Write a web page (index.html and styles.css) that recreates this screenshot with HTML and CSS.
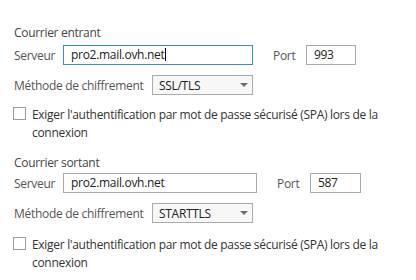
FILE: index.html
```html
<!DOCTYPE html>
<html>

<head>
    <title>Paramètres du serveur</title>
    <link rel="stylesheet" href="styles.css">
</head>

<body>
    <div class="settings">

        <!-- Courrier entrant -->
        <div class="server-block">
            <div class="block-title">Courrier entrant</div>
            <div class="field-row">
                <span class="field-label server-label">Serveur</span>
                <div class="text-box server-box focused">pro2.mail.ovh.net<span class="caret"></span></div>
                <span class="field-label port-label">Port</span>
                <div class="text-box port-box">993</div>
            </div>
            <div class="field-row method-row">
                <span class="field-label method-label">Méthode de chiffrement</span>
                <div class="dropdown">
                    <span>SSL/TLS</span>
                    <span class="dropdown-arrow"></span>
                </div>
            </div>
            <div class="check-row">
                <span class="checkbox"></span>
                <span class="check-text">Exiger l'authentification par mot de passe sécurisé (SPA) lors de la connexion</span>
            </div>
        </div>

        <!-- Courrier sortant -->
        <div class="server-block outgoing">
            <div class="block-title">Courrier sortant</div>
            <div class="field-row">
                <span class="field-label server-label">Serveur</span>
                <div class="text-box server-box">pro2.mail.ovh.net</div>
                <span class="field-label port-label">Port</span>
                <div class="text-box port-box">587</div>
            </div>
            <div class="field-row method-row">
                <span class="field-label method-label">Méthode de chiffrement</span>
                <div class="dropdown">
                    <span>STARTTLS</span>
                    <span class="dropdown-arrow"></span>
                </div>
            </div>
            <div class="check-row">
                <span class="checkbox"></span>
                <span class="check-text">Exiger l'authentification par mot de passe sécurisé (SPA) lors de la connexion</span>
            </div>
        </div>

    </div>
</body>

</html>
```

FILE: styles.css
```css
body {
    margin: 0;
    background-color: #ffffff;
    font-family: "Open Sans", "Noto Sans", Arial, sans-serif;
    font-size: 12px;
    letter-spacing: -0.3px;
    color: #333333;
}

.settings {
    width: 402px;
    padding: 25px 0 0 14px;
}

.server-block {
    margin-bottom: 13px;
}

.block-title {
    line-height: 16px;
    color: #444444;
    margin-bottom: 4px;
}

.outgoing .block-title {
    margin-bottom: 2px;
}

/* lignes de champs */
.field-row {
    display: flex;
    align-items: center;
    height: 20px;
}

.method-row {
    margin-top: 10px;
}

.field-label {
    color: #555555;
}

.server-label {
    width: 49px;
}

.method-label {
    width: 138px;
}

.port-label {
    width: 33px;
    margin-left: 20px;
}

.text-box {
    box-sizing: border-box;
    height: 20px;
    line-height: 18px;
    padding: 0 7px;
    border: 1px solid #ababab;
    color: #222222;
    white-space: nowrap;
}

.server-box {
    width: 190px;
}

.outgoing .server-box {
    width: 194px;
}

.port-box {
    width: 50px;
}

.outgoing .port-box {
    width: 51px;
}

.text-box.focused {
    border-color: #3c8ad6;
}

.caret {
    display: inline-block;
    width: 1px;
    height: 13px;
    margin-left: 1px;
    background: #000000;
    vertical-align: -2px;
}

/* liste déroulante */
.dropdown {
    box-sizing: border-box;
    display: flex;
    align-items: center;
    justify-content: space-between;
    width: 101px;
    height: 20px;
    padding: 0 4px 0 6px;
    border: 1px solid #ababab;
    background-color: #f7f7f7;
    color: #222222;
}

.dropdown-arrow {
    width: 0;
    height: 0;
    border-left: 4px solid transparent;
    border-right: 4px solid transparent;
    border-top: 4px solid #6d6d6d;
}

/* case à cocher */
.check-row {
    display: flex;
    align-items: flex-start;
    margin-top: 11px;
    width: 380px;
}

.outgoing .check-row {
    margin-top: 13px;
}

.checkbox {
    flex: none;
    box-sizing: border-box;
    width: 13px;
    height: 13px;
    margin: 1px 6px 0 -1px;
    border: 1px solid #9a9a9a;
    background: #ffffff;
}

.check-text {
    line-height: 18px;
    color: #333333;
}
```
